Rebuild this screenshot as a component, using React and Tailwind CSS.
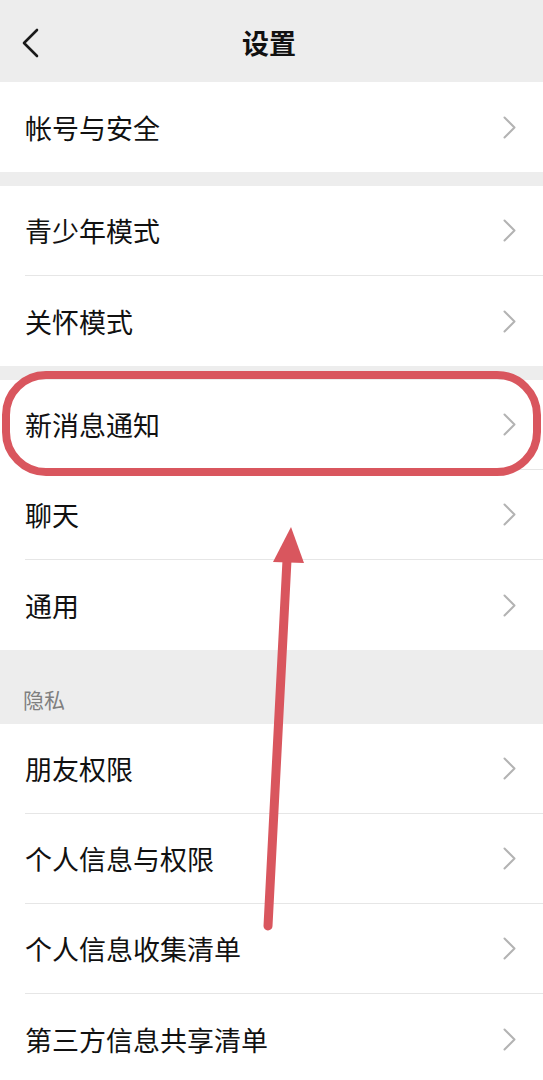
import React from 'react';

const FONT = { fontFamily: '"Noto Sans CJK SC", "Noto Sans", sans-serif' };

function Chevron() {
    return (
        <svg width="13" height="23" viewBox="0 0 13 23" fill="none" className="shrink-0">
            <path d="M1.5 1.5 L11.5 11.5 L1.5 21.5" stroke="#b3b3b3" strokeWidth="2" strokeLinecap="round" strokeLinejoin="round" />
        </svg>
    );
}

function Row({ label, last }) {
    return (
        <div className="h-[90px] flex items-stretch bg-white pl-[25px]">
            <div className={`flex-1 flex items-center justify-between pr-[27px] ${last ? '' : 'border-b border-[#e6e6e6]'}`}>
                <span className="text-[27px] text-[#111111] leading-none">{label}</span>
                <Chevron />
            </div>
        </div>
    );
}

function Group({ items }) {
    return (
        <div className="flex flex-col">
            {items.map((label, i) => (
                <Row key={label} label={label} last={i === items.length - 1} />
            ))}
        </div>
    );
}

export default function App() {
    return (
        <div className="relative w-[543px] h-[1080px] overflow-hidden bg-[#ededed]" style={FONT}>
            <div className="h-[82px] flex items-center pt-[4px]">
                <div className="w-[60px] pl-[20px] flex items-center">
                    <svg width="20" height="30" viewBox="0 0 20 30" fill="none">
                        <path d="M17 2 L4 15 L17 28" stroke="#1a1a1a" strokeWidth="2.6" strokeLinecap="round" strokeLinejoin="round" />
                    </svg>
                </div>
                <div className="flex-1 text-center text-[27px] font-bold text-[#111111]">设置</div>
                <div className="w-[65px]" />
            </div>

            <Group items={['帐号与安全']} />
            <div className="h-[14px]" />
            <Group items={['青少年模式', '关怀模式']} />
            <div className="h-[14px]" />
            <Group items={['新消息通知', '聊天', '通用']} />

            <div className="h-[74px] flex items-end pl-[23px] pb-[14px]">
                <span className="text-[21px] text-[#7f7f7f] leading-none">隐私</span>
            </div>
            <Group items={['朋友权限', '个人信息与权限', '个人信息收集清单', '第三方信息共享清单']} />

            <svg className="absolute inset-0 pointer-events-none" width="543" height="1080" viewBox="0 0 543 1080" fill="none">
                <rect x="6" y="375" width="531" height="97" rx="40" stroke="#d9565e" strokeWidth="8" />
                <path d="M268 926 L287 560" stroke="#d9565e" strokeWidth="9" strokeLinecap="round" />
                <path d="M291 527 L304 563 L273 562 Z" fill="#d9565e" />
            </svg>
        </div>
    );
}
